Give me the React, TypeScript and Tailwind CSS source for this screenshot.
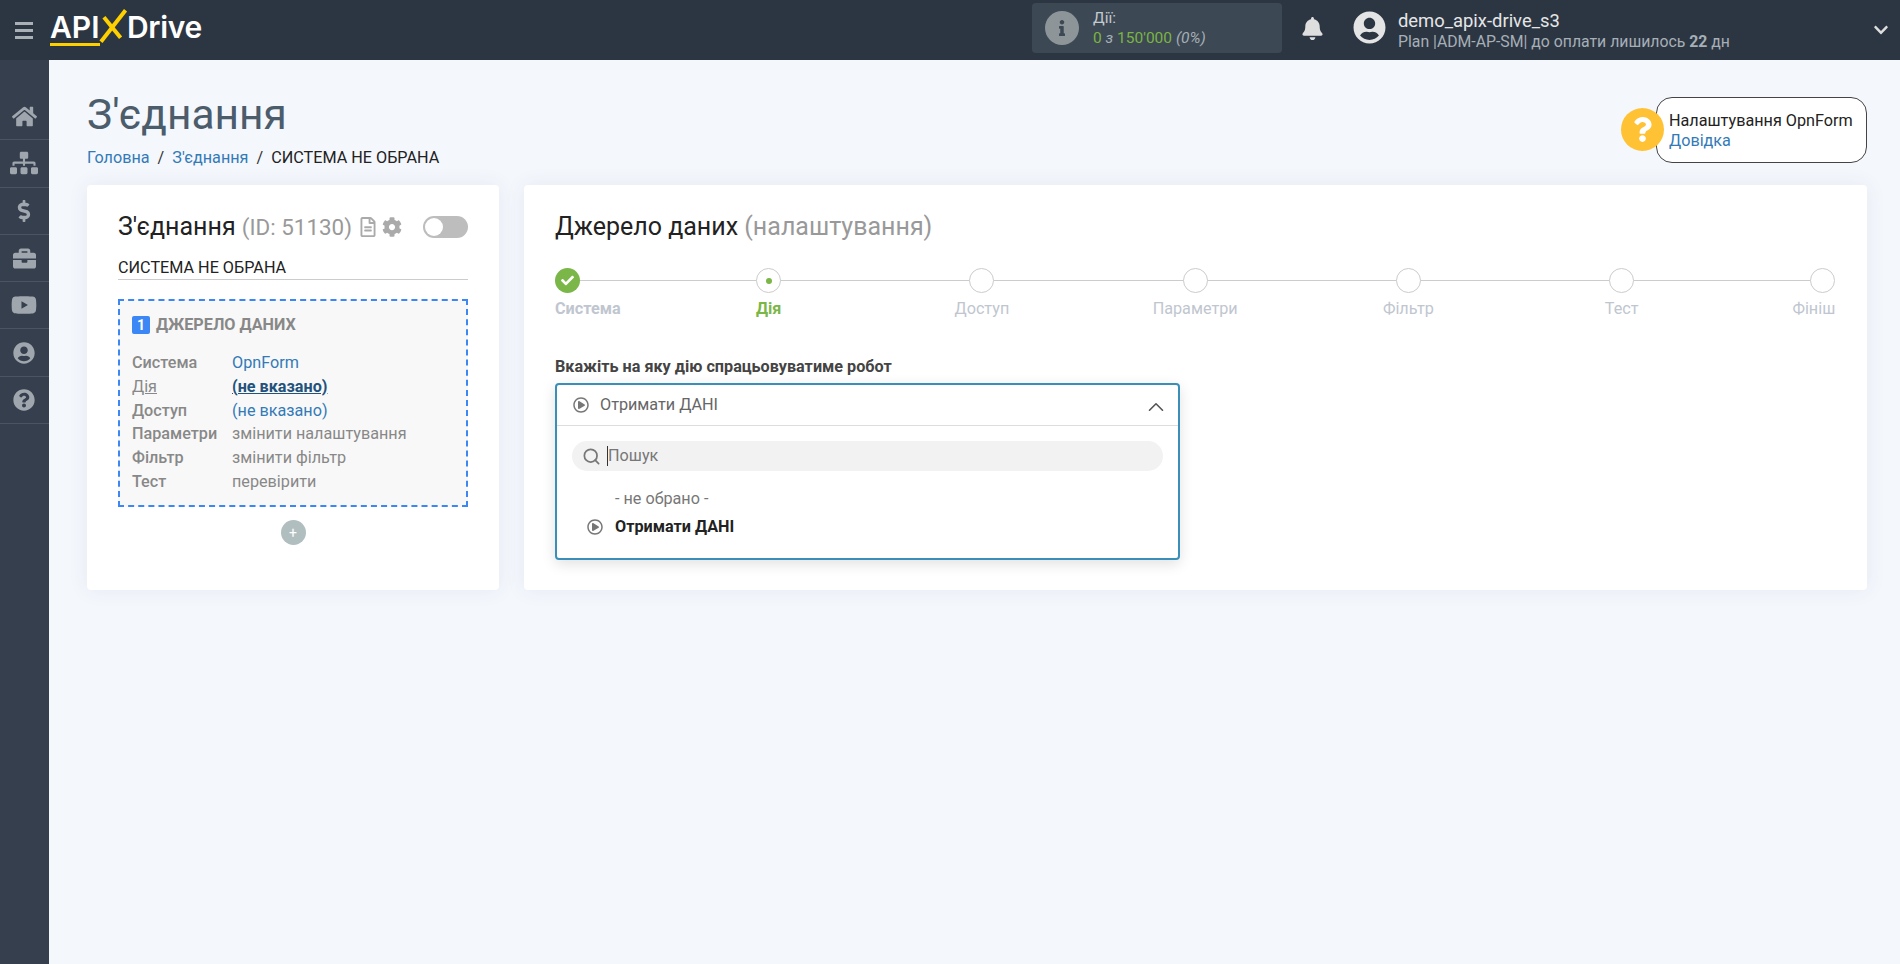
import { ChevronUp, Search } from "lucide-react";
import {
  FaBell,
  FaBriefcase,
  FaCheck,
  FaChevronDown,
  FaCog,
  FaDollarSign,
  FaHome,
  FaInfo,
  FaQuestion,
  FaQuestionCircle,
  FaRegFileAlt,
  FaRegPlayCircle,
  FaSitemap,
  FaUserCircle,
  FaYoutube,
} from "react-icons/fa";

const sideItems = [
  { icon: FaHome, size: 25 },
  { icon: FaSitemap, size: 28 },
  { icon: FaDollarSign, size: 22 },
  { icon: FaBriefcase, size: 23 },
  { icon: FaYoutube, size: 26 },
  { icon: FaUserCircle, size: 22 },
  { icon: FaQuestionCircle, size: 22 },
];

const summary = [
  { label: "Система", value: "OpnForm", valueClass: "text-[#337ab7]", labelClass: "" },
  { label: "Дія", value: "(не вказано)", valueClass: "text-[#23527c] font-bold underline", labelClass: "underline font-normal" },
  { label: "Доступ", value: "(не вказано)", valueClass: "text-[#337ab7]", labelClass: "" },
  { label: "Параметри", value: "змінити налаштування", valueClass: "text-[#888]", labelClass: "" },
  { label: "Фільтр", value: "змінити фільтр", valueClass: "text-[#888]", labelClass: "" },
  { label: "Тест", value: "перевірити", valueClass: "text-[#888]", labelClass: "" },
];

const steps = ["Дія", "Доступ", "Параметри", "Фільтр", "Тест"];

function Logo() {
  return (
    <div className="relative mb-[3px] ml-[17px] flex h-[40px] w-[152px] items-center font-['Inter',sans-serif] text-[30px] font-semibold text-white">
      <span className="border-b-[3px] border-[#ffd000] pr-[1px] leading-[31px]">API</span>
      <svg className="mx-[-1px] mt-[-3px] h-[36px] w-[29px]" viewBox="0 0 29 36" fill="none">
        <path d="M2 33 L27 1" stroke="#ffd000" strokeWidth="4" />
        <path d="M5 8 L22 29" stroke="#ffd000" strokeWidth="4" />
      </svg>
      <span className="mb-[3px] leading-[31px] tracking-[-0.3px]">Drive</span>
    </div>
  );
}

function Header() {
  return (
    <header className="flex h-[60px] shrink-0 items-center bg-[#2c3643]">
      <div className="ml-[15px] flex w-[18px] flex-col gap-[4px]">
        <span className="h-[3px] bg-[#a9b0b6]" />
        <span className="h-[3px] bg-[#a9b0b6]" />
        <span className="h-[3px] bg-[#a9b0b6]" />
      </div>
      <Logo />
      <div className="mb-[4px] ml-[830px] flex h-[50px] w-[250px] items-center rounded-[4px] bg-[#3c4955] pl-[13px]">
        <div className="flex h-[34px] w-[34px] items-center justify-center rounded-full bg-[#8d9599]">
          <FaInfo className="text-[#3c4955]" size={16} />
        </div>
        <div className="ml-[14px] text-[15.5px] leading-[20px]">
          <div className="text-[#c5cace]">Дії:</div>
          <div className="text-[#7cb342]">
            0 <span className="italic text-[#a7afb6]">з</span> 150'000 <span className="italic text-[#a7afb6]">(0%)</span>
          </div>
        </div>
      </div>
      <FaBell className="mb-[4px] ml-[19px] text-[#dedede]" size={23} />
      <FaUserCircle className="mb-[5px] ml-[29px] text-[#e4e4e4]" size={33} />
      <div className="ml-[12px]">
        <div className="text-[18.4px] leading-[22px] text-[#e6e6e6]">demo_apix-drive_s3</div>
        <div className="text-[15.8px] leading-[19px] text-[#a7afb6]">
          Plan |ADM-AP-SM| до оплати лишилось <b>22</b> дн
        </div>
      </div>
      <FaChevronDown className="ml-auto mr-[11px] text-[#dedede]" size={16} />
    </header>
  );
}

function Sidebar() {
  return (
    <aside className="w-[49px] shrink-0 bg-[#353f4d] pt-[33px]">
      {sideItems.map((item, index) => {
        const Icon = item.icon;
        return (
          <div key={index} className="flex h-[47.3px] items-center justify-center border-b border-[#4a5462] pr-[1px] text-[#a0a6ad]">
            <Icon size={item.size} />
          </div>
        );
      })}
    </aside>
  );
}

function ConnectionCard() {
  return (
    <section className="h-[405px] w-[412px] shrink-0 rounded-[4px] bg-white px-[31px] pt-[24px] shadow-[0_0_20px_rgba(60,80,120,0.08)]">
      <div className="flex h-[36px] items-center">
        <h2 className="text-[25px] text-[#222]">
          З'єднання <span className="text-[22.4px] text-[#999]">(ID: 51130)</span>
        </h2>
        <FaRegFileAlt className="ml-[6px] text-[#aaa]" size={20} />
        <FaCog className="ml-[4px] text-[#aaa]" size={20} />
        <div className="ml-auto flex h-[22px] w-[45px] items-center rounded-full bg-[#bdbdbd] pl-[2px]">
          <span className="h-[18px] w-[18px] rounded-full bg-white" />
        </div>
      </div>
      <div className="mt-[13px] h-[22px] border-b border-[#ccc] text-[16.2px] leading-[20px] text-[#222]">СИСТЕМА НЕ ОБРАНА</div>
      <div className="mt-[19px] h-[208px] border-2 border-dashed border-[#3b87f5] bg-[#f8f8f8] px-[12px] pt-[15px]">
        <div className="flex h-[18px] items-center text-[16.2px] font-bold text-[#888]">
          <span className="flex h-[18px] w-[18px] items-center justify-center rounded-[2px] bg-[#3b87f5] text-[14px] text-white">1</span>
          <span className="ml-[6px]">ДЖЕРЕЛО ДАНИХ</span>
        </div>
        <div className="mt-[17px] text-[16.2px] leading-[24px]">
          {summary.map((row) => (
            <div key={row.label} className="flex h-[23.8px]">
              <span className={`w-[100px] font-medium text-[#888] ${row.labelClass}`}>{row.label}</span>
              <span className={row.valueClass}>{row.value}</span>
            </div>
          ))}
        </div>
      </div>
      <div className="mt-[13px] flex justify-center">
        <div className="flex h-[25px] w-[25px] items-center justify-center rounded-full bg-[#b0bec0] text-[14px] leading-none text-white">+</div>
      </div>
    </section>
  );
}

function Stepper() {
  return (
    <div className="relative mt-[23px] grid grid-cols-[107px_repeat(5,213.25px)_107px]">
      <div className="absolute left-[12px] right-[12px] top-[12px] h-[1px] bg-[#ccc]" />
      <div className="relative flex flex-col items-start">
        <div className="flex h-[25px] w-[25px] items-center justify-center rounded-full bg-[#7ab648]">
          <FaCheck className="text-white" size={13} />
        </div>
        <span className="mt-[6px] text-[16.2px] font-bold leading-[20px] text-[#c0c6cf]">Система</span>
      </div>
      {steps.map((step, index) => (
        <div key={step} className="relative flex flex-col items-center">
          <div className="flex h-[25px] w-[25px] items-center justify-center rounded-full border border-[#ccc] bg-white">
            {index === 0 && <span className="h-[6px] w-[6px] rounded-full bg-[#7ab648]" />}
          </div>
          <span className={index === 0 ? "mt-[6px] text-[16.2px] font-bold leading-[20px] text-[#7ab648]" : "mt-[6px] text-[16.2px] leading-[20px] text-[#c0c6cf]"}>{step}</span>
        </div>
      ))}
      <div className="relative flex flex-col items-end">
        <div className="h-[25px] w-[25px] rounded-full border border-[#ccc] bg-white" />
        <span className="mt-[6px] text-[16.2px] leading-[20px] text-[#c0c6cf]">Фініш</span>
      </div>
    </div>
  );
}

function ActionSelect() {
  return (
    <div className="mt-[5px] h-[177px] w-[625px] rounded-[4px] border-2 border-[#3a8fb8] bg-white shadow-[0_4px_14px_rgba(0,0,0,0.12)]">
      <div className="flex h-[41px] items-center border-b border-[#ddd] pl-[16px] pr-[9px] text-[16.2px] text-[#666]">
        <FaRegPlayCircle className="text-[#777]" size={16} />
        <span className="ml-[11px]">Отримати ДАНІ</span>
        <ChevronUp className="ml-auto mt-[3px] text-[#555]" size={26} strokeWidth={1.5} />
      </div>
      <div className="mx-[15px] mt-[15px] flex h-[30px] items-center rounded-full bg-[#f2f2f2] pl-[10px] text-[16.2px] text-[#777]">
        <Search className="text-[#777]" size={19} strokeWidth={2.2} />
        <span className="ml-[6px] h-[20px] w-[1px] bg-[#333]" />
        <span>Пошук</span>
      </div>
      <div className="mt-[14px] pl-[30px] text-[16.2px] leading-[28px]">
        <div className="pl-[28px] text-[#777]">- не обрано -</div>
        <div className="flex items-center font-bold text-[#222]">
          <FaRegPlayCircle className="font-normal text-[#777]" size={16} />
          <span className="ml-[12px]">Отримати ДАНІ</span>
        </div>
      </div>
    </div>
  );
}

export default function App() {
  return (
    <div className="flex h-screen flex-col overflow-hidden bg-[#f4f7fc] font-['Roboto',sans-serif]">
      <Header />
      <div className="flex min-h-0 flex-1">
        <Sidebar />
        <main className="min-w-0 flex-1 pl-[38px] pr-[33px]">
          <div className="flex h-[125px] items-start justify-between">
            <div>
              <h1 className="mt-[30px] text-[42.5px] font-normal leading-[50px] text-[#4b5c6b]">З'єднання</h1>
              <div className="mt-[6px] text-[16.2px] leading-[24px]">
                <span className="text-[#337ab7]">Головна</span>
                <span className="mx-[8px] text-[#333]">/</span>
                <span className="text-[#337ab7]">З'єднання</span>
                <span className="mx-[8px] text-[#333]">/</span>
                <span className="text-[#222]">СИСТЕМА НЕ ОБРАНА</span>
              </div>
            </div>
            <div className="relative mt-[37px] h-[66px] w-[211px] rounded-[16px] border border-[#444] bg-white pl-[12px] pt-[13px] text-[16.2px] leading-[20px]">
              <div className="absolute left-[-36px] top-[10px] flex h-[43px] w-[43px] items-center justify-center rounded-full bg-[#ffc234]">
                <FaQuestion className="text-white" size={25} />
              </div>
              <div className="text-[#222]">Налаштування OpnForm</div>
              <div className="text-[#337ab7]">Довідка</div>
            </div>
          </div>
          <div className="flex gap-[25px]">
            <ConnectionCard />
            <section className="h-[405px] flex-1 rounded-[4px] bg-white px-[31px] pt-[24px] shadow-[0_0_20px_rgba(60,80,120,0.08)]">
              <h2 className="h-[36px] text-[25px] leading-[36px] text-[#222]">
                Джерело даних <span className="text-[#999]">(налаштування)</span>
              </h2>
              <Stepper />
              <div className="mt-[37px] text-[16.2px] font-bold leading-[22px] text-[#444]">Вкажіть на яку дію спрацьовуватиме робот</div>
              <ActionSelect />
            </section>
          </div>
        </main>
      </div>
    </div>
  );
}
